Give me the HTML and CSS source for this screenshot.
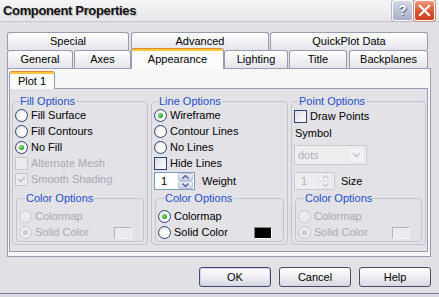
FILE: index.html
```html
<!DOCTYPE html>
<html>
<head>
<meta charset="utf-8">
<link rel="stylesheet" href="styles.css">
</head>
<body>
<div class="window">
  <div class="titlebar">
    <span class="title">Component Properties</span>
    <div class="tbtns">
      <span class="tb tb-help">?</span>
      <span class="tb tb-close"><svg width="13" height="13" viewBox="0 0 13 13"><path d="M2 2 L11 11 M11 2 L2 11" stroke="#fff" stroke-width="2.2" stroke-linecap="square"/></svg></span>
    </div>
  </div>
  <div class="client">
    <div class="tabrow">
      <div class="tab w-special">Special</div>
      <div class="tab w-advanced">Advanced</div>
      <div class="tab w-quick">QuickPlot Data</div>
    </div>
    <div class="tabrow">
      <div class="tab w-general">General</div>
      <div class="tab w-axes">Axes</div>
      <div class="tab tab-sel w-appearance">Appearance</div>
      <div class="tab w-lighting">Lighting</div>
      <div class="tab w-title">Title</div>
      <div class="tab w-back">Backplanes</div>
    </div>
    <div class="panel">
      <div class="subtabs">
        <div class="tab tab-sel sub-sel w-plot">Plot 1</div>
      </div>
      <div class="page">
        <fieldset class="grp g-fill">
          <legend>Fill Options</legend>
          <div class="rows">
            <div class="row"><span class="radio"></span>Fill Surface</div>
            <div class="row"><span class="radio"></span>Fill Contours</div>
            <div class="row"><span class="radio on"></span>No Fill</div>
            <div class="row dis"><span class="check"></span>Alternate Mesh</div>
            <div class="row dis"><span class="check checked"><svg width="11" height="11" viewBox="0 0 11 11"><path d="M2 5 L4.5 7.5 L9 3" fill="none" stroke="#c4c4c8" stroke-width="1.8"/></svg></span>Smooth Shading</div>
          </div>
          <fieldset class="grp sub">
            <legend>Color Options</legend>
            <div class="subrows">
              <div class="row dis"><span class="radio"></span>Colormap</div>
              <div class="row dis"><span class="radio on"></span>Solid Color<span class="swatch sw-dis"></span></div>
            </div>
          </fieldset>
        </fieldset>
        <fieldset class="grp g-line">
          <legend>Line Options</legend>
          <div class="rows">
            <div class="row"><span class="radio on"></span>Wireframe</div>
            <div class="row"><span class="radio"></span>Contour Lines</div>
            <div class="row"><span class="radio"></span>No Lines</div>
            <div class="row"><span class="check"></span>Hide Lines</div>
            <div class="row spinrow">
              <span class="spin"><span class="spin-val">1</span><span class="spin-btns"><span class="sb"><svg width="7" height="4" viewBox="0 0 7 4"><path d="M0.5 3.5 L3.5 0.5 L6.5 3.5" fill="none" stroke="#4d6185" stroke-width="1.4"/></svg></span><span class="sb"><svg width="7" height="4" viewBox="0 0 7 4"><path d="M0.5 0.5 L3.5 3.5 L6.5 0.5" fill="none" stroke="#4d6185" stroke-width="1.4"/></svg></span></span></span>
              <span class="spinlabel">Weight</span>
            </div>
          </div>
          <fieldset class="grp sub">
            <legend>Color Options</legend>
            <div class="subrows">
              <div class="row"><span class="radio on"></span>Colormap</div>
              <div class="row"><span class="radio"></span>Solid Color<span class="swatch sw-black"></span></div>
            </div>
          </fieldset>
        </fieldset>
        <fieldset class="grp g-point">
          <legend>Point Options</legend>
          <div class="rows">
            <div class="row drawrow"><span class="check"></span>Draw Points</div>
            <div class="row symrow">Symbol</div>
            <div class="combo"><span class="combo-val">dots</span><span class="combo-btn"><svg width="9" height="6" viewBox="0 0 9 6"><path d="M1 1 L4.5 4.5 L8 1" fill="none" stroke="#c8c8d0" stroke-width="1.6"/></svg></span></div>
            <div class="row spinrow2">
              <span class="spin spin-dis"><span class="spin-val">1</span><span class="spin-btns"><span class="sb"><svg width="7" height="4" viewBox="0 0 7 4"><path d="M0.5 3.5 L3.5 0.5 L6.5 3.5" fill="none" stroke="#c8c8d0" stroke-width="1.4"/></svg></span><span class="sb"><svg width="7" height="4" viewBox="0 0 7 4"><path d="M0.5 0.5 L3.5 3.5 L6.5 0.5" fill="none" stroke="#c8c8d0" stroke-width="1.4"/></svg></span></span></span>
              <span class="spinlabel">Size</span>
            </div>
          </div>
          <fieldset class="grp sub">
            <legend>Color Options</legend>
            <div class="subrows">
              <div class="row dis"><span class="radio"></span>Colormap</div>
              <div class="row dis"><span class="radio on"></span>Solid Color<span class="swatch sw-dis"></span></div>
            </div>
          </fieldset>
        </fieldset>
      </div>
    </div>
    <div class="buttons">
      <span class="btn btn-def">OK</span>
      <span class="btn">Cancel</span>
      <span class="btn">Help</span>
    </div>
  </div>
</div>
</body>
</html>
```
FILE: styles.css
```css
html, body {
  margin: 0;
  padding: 0;
}
body {
  width: 439px;
  height: 297px;
  overflow: hidden;
  background: #e3e3e7;
  font-family: "Liberation Sans", Arial, sans-serif;
  font-size: 11px;
  color: #000;
}
.window {
  box-sizing: border-box;
  width: 439px;
  height: 297px;
  background: #e1e0e5;
  border-bottom: 3px solid #d8d8de;
  box-shadow: inset 0 -1px 0 #7c7c94;
}
.titlebar {
  box-sizing: border-box;
  height: 22px;
  display: flex;
  align-items: center;
  justify-content: space-between;
  background: linear-gradient(#f6f6f8, #e6e6ea);
  border-bottom: 1px solid #c6c6cc;
}
.title {
  padding-left: 3px;
  font-weight: bold;
  font-size: 13px;
  letter-spacing: -0.35px;
  color: #111;
  text-shadow: 1px 1px 1px #b8b8c0;
  line-height: 22px;
}
.tbtns {
  display: flex;
  gap: 1px;
  padding-right: 4px;
  padding-bottom: 1px;
}
.tb {
  box-sizing: border-box;
  width: 21px;
  height: 21px;
  border: 1px solid #fff;
  border-radius: 3px;
  display: flex;
  align-items: center;
  justify-content: center;
}
.tb-help {
  background: linear-gradient(#d6d9e6, #a9aec8);
  color: #fff;
  font-weight: bold;
  font-size: 14px;
  text-shadow: 0 0 1px #505a80, 1px 1px 0 #6a7096;
  box-shadow: 0 0 0 1px #b4b8cc;
}
.tb-close {
  background: linear-gradient(#f09a80, #d8502e 60%, #c8401e);
  box-shadow: 0 0 0 1px #c89080;
}
.client {
  padding: 10px 0 0 7px;
}
.tabrow {
  display: flex;
  height: 18px;
}
.tab {
  box-sizing: border-box;
  height: 18px;
  border: 1px solid #9b9bb0;
  border-bottom: none;
  border-radius: 3px 3px 0 0;
  background: linear-gradient(#ffffff, #e4e4ec);
  text-align: center;
  line-height: 17px;
  flex: none;
}
.w-special { width: 122px; margin-right: 2px; }
.w-advanced { width: 138px; margin-right: 1px; }
.w-quick { width: 158px; }
.w-general { width: 66px; margin-right: 1px; }
.w-axes { width: 57px; }
.w-appearance { width: 93px; }
.w-lighting { width: 64px; margin-right: 1px; }
.w-title { width: 58px; margin-right: 2px; }
.w-back { width: 79px; }
.tab-sel {
  position: relative;
  z-index: 2;
  height: 21px;
  margin-top: -2px;
  border-top: none;
  background: linear-gradient(#e08a30 0 1px, #ffc73c 1px 3px, #fbfbfc 3px);
  line-height: 19px;
  padding-top: 0;
}
.w-appearance.tab-sel { line-height: 17px; padding-top: 3px; }
.panel {
  box-sizing: border-box;
  width: 424px;
  height: 189px;
  border: 1px solid #9b9bb0;
  background: #f7f7f8;
  padding: 2px 2px 0 1px;
}
.subtabs {
  display: flex;
  height: 17px;
  padding-left: 0;
}
.w-plot { width: 46px; }
.sub-sel {
  margin-top: 0;
  height: 18px;
  line-height: 17px;
  padding-top: 2px;
  text-align: center;
}
.page {
  box-sizing: border-box;
  height: 164px;
  border: 1px solid #9b9bb0;
  background: #e2e2e7;
  display: flex;
  gap: 3px;
  padding: 6px 0 0 2px;
}
.grp {
  box-sizing: border-box;
  margin: 0;
  padding: 0 2px 2px 2px;
  border: 1px solid #c4c4cc;
  border-radius: 4px;
  min-width: 0;
  display: flex;
  flex-direction: column;
}
.grp legend {
  color: #1e4fc6;
  line-height: 13px;
  padding: 0 1px;
  margin-left: 4px;
}
.g-fill { width: 136px; height: 150px; }
.g-line { width: 137px; height: 150px; }
.g-point { width: 135px; height: 150px; }
.rows {
  margin-top: -1px;
  height: 80px;
  display: flex;
  flex-direction: column;
}
.row {
  display: flex;
  align-items: center;
  height: 16px;
  gap: 3px;
  white-space: nowrap;
  flex: none;
}
.dis { color: #a9a9b2; }
.radio {
  box-sizing: border-box;
  width: 13px;
  height: 13px;
  border-radius: 50%;
  border: 1px solid #2c4470;
  background: radial-gradient(circle at 65% 65%, #ffffff 30%, #dcdce0 100%);
  display: inline-flex;
  align-items: center;
  justify-content: center;
  flex: none;
}
.radio.on::after {
  content: "";
  width: 5px;
  height: 5px;
  border-radius: 50%;
  background: radial-gradient(circle at 40% 40%, #8ee08e, #21a121 70%);
}
.dis .radio {
  border-color: #c8c8cc;
  background: #ececee;
}
.dis .radio.on::after {
  background: #cacace;
}
.check {
  box-sizing: border-box;
  width: 13px;
  height: 13px;
  border: 1px solid #2c4470;
  background: linear-gradient(135deg, #dcdce2, #ffffff);
  display: inline-flex;
  align-items: center;
  justify-content: center;
  flex: none;
}
.dis .check {
  border-color: #c8c8cc;
  background: #ececee;
}
.sub {
  margin: 5px 1px 0 1px;
  padding: 0 2px 0 2px;
  height: 51px;
}
.sub legend { margin-left: 6px; }
.subrows {
  margin-top: 3px;
  display: flex;
  flex-direction: column;
}
.swatch {
  margin-left: auto;
  margin-right: 9px;
  box-sizing: border-box;
  width: 18px;
  height: 12px;
  margin-top: 2px;
}
.sw-dis {
  border: 1px solid #b4b4bc;
  border-right-color: #f4f4f6;
  border-bottom-color: #f4f4f6;
  background: #ececee;
}
.sw-black {
  border: 1px solid #808080;
  border-right-color: #fff;
  border-bottom-color: #fff;
  background: #000;
}
.spinrow {
  height: 20px;
  gap: 7px;
}
.spin {
  box-sizing: border-box;
  width: 41px;
  height: 18px;
  border: 1px solid #7f9db9;
  background: #fff;
  display: flex;
  align-items: center;
  justify-content: space-between;
  padding: 1px;
}
.spin-val { padding-left: 5px; }
.spin-btns {
  display: flex;
  flex-direction: column;
  gap: 0;
  width: 15px;
  height: 16px;
}
.sb {
  box-sizing: border-box;
  height: 8px;
  border: 1px solid #b8c4de;
  border-radius: 2px;
  background: linear-gradient(#eef0f8, #c8d0e8);
  display: flex;
  align-items: center;
  justify-content: center;
}
.spin-dis {
  border-color: #cacad0;
  background: #eeeef0;
  color: #b0b0b8;
}
.spin-dis .sb {
  border-color: #e4e4ea;
  background: #f0f0f4;
}
.spinlabel { color: #000; }
.drawrow { margin-top: 1px; }
.symrow { margin-top: 1px; padding-left: 1px; }
.combo {
  box-sizing: border-box;
  margin-top: 4px;
  width: 73px;
  height: 20px;
  border: 1px solid #cacad0;
  background: #eeeef0;
  display: flex;
  align-items: center;
  justify-content: space-between;
  padding: 1px;
  flex: none;
}
.combo-val { color: #b0b0b8; padding-left: 2px; }
.combo-btn {
  box-sizing: border-box;
  width: 17px;
  height: 16px;
  border: 1px solid #e6e6ea;
  border-radius: 2px;
  background: #f2f2f4;
  display: flex;
  align-items: center;
  justify-content: center;
}
.spinrow2 {
  margin-top: 7px;
  height: 18px;
  gap: 6px;
}
.buttons {
  display: flex;
  justify-content: flex-end;
  gap: 8px;
  width: 424px;
  margin-top: 10px;
}
.btn {
  box-sizing: border-box;
  width: 72px;
  height: 20px;
  border: 1px solid #4a4a68;
  border-radius: 3px;
  background: linear-gradient(#ffffff, #f2f2f6 40%, #d8d8e2);
  display: flex;
  align-items: center;
  justify-content: center;
}
.btn-def {
  box-shadow: inset 0 0 0 1px #c8d4f0;
}
```
